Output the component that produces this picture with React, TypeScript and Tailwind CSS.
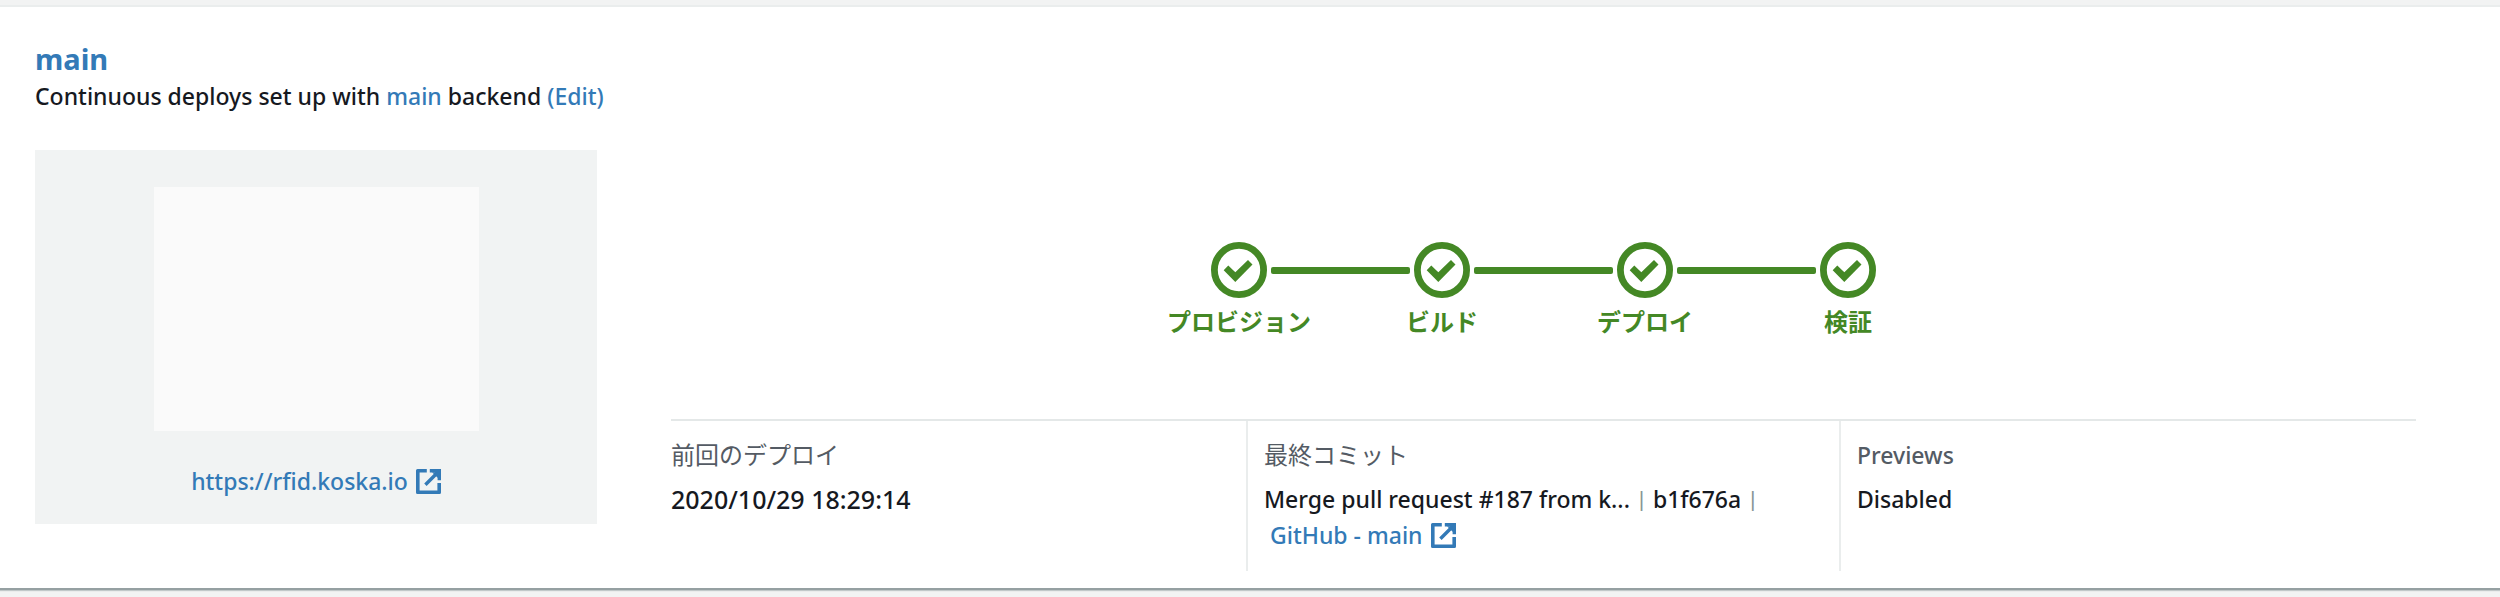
import React from "react";
import type { ReactNode } from "react";

const STEPS = ["プロビジョン", "ビルド", "デプロイ", "検証"];

function ExternalIcon() {
  return (
    <svg viewBox="0 0 25 25" className="size-[25px] shrink-0" fill="currentColor" aria-hidden="true">
      <path d="M1.5 0H10.8V3.5H3.6V21.4H21.4V14H25V23.5A1.5 1.5 0 0 1 23.5 25H1.5A1.5 1.5 0 0 1 0 23.5V1.5A1.5 1.5 0 0 1 1.5 0Z" />
      <path d="M13.8 0H25V11.2H21.6V6L10.6 17L8.2 14.6L19.2 3.5H13.8Z" />
      <path d="M16 3.2H22V9Z" />
    </svg>
  );
}

function CheckCircle() {
  return (
    <svg viewBox="-28 -28 56 56" className="mx-1 size-14 shrink-0" aria-hidden="true">
      <circle r="24.6" fill="none" stroke="currentColor" strokeWidth="6.8" />
      <path fill="currentColor" d="M-15.3 0.2L-10.7 -4.6L-3.7 2.2L9 -10L13.5 -5.6L-3.7 12Z" />
    </svg>
  );
}

function Step({ label, first, last }: { label: string; first: boolean; last: boolean }) {
  return (
    <li className="flex w-[203px] flex-col items-center gap-[6px]">
      <div className="flex w-full items-center">
        <span className={`h-[7px] flex-1 rounded-r-xs ${first ? "" : "bg-current"}`} />
        <CheckCircle />
        <span className={`h-[7px] flex-1 rounded-l-xs ${last ? "" : "bg-current"}`} />
      </div>
      <span className="text-[24px] font-bold">{label}</span>
    </li>
  );
}

function Detail({ title, className, children }: { title: ReactNode; className: string; children: ReactNode }) {
  return (
    <div className={`flex flex-col gap-2 pt-4 pb-[18px] ${className}`}>
      <dt className="text-[#545b64]">{title}</dt>
      <dd>{children}</dd>
    </div>
  );
}

function JaTitle({ children }: { children: ReactNode }) {
  return <span className="text-[24px] font-normal">{children}</span>;
}

function Bar() {
  return <span className="text-[20px] text-[#879596]">|</span>;
}

export default function App() {
  return (
    <div
      lang="ja"
      className="min-h-screen bg-[#f2f3f3] font-['Noto_Sans','Noto_Sans_CJK_JP',sans-serif] text-[23px] leading-[36px] font-medium text-[#16191f]"
    >
      <div className="h-[7px] border-b-2 border-[#eaeded]" />
      <main className="border-b-2 border-[#95a0a2] bg-white pt-8 pr-[84px] pb-[17px] pl-[35px] shadow-[0_1px_1px_rgba(0,28,36,0.2)]">
        <h2 className="text-[29px] leading-[39px] font-bold">
          <a href="#main" className="text-[#337ab7]">main</a>
        </h2>
        <p>
          Continuous deploys set up with <a href="#backend" className="text-[#337ab7]">main</a> backend{" "}
          <a href="#edit" className="text-[#337ab7]">(Edit)</a>
        </p>

        <div className="mt-9 flex items-start gap-[74px]">
          <div className="flex w-[562px] shrink-0 flex-col items-center gap-8 bg-[#f1f3f3] pt-[37px] pb-[25px]">
            <div className="h-[244px] w-[325px] bg-[#fafafa]" />
            <a href="https://rfid.koska.io" className="flex items-center gap-2 text-[#337ab7]">
              https://rfid.koska.io
              <ExternalIcon />
            </a>
          </div>

          <div className="min-w-0 flex-1 pt-[92px]">
            <ol className="flex justify-center text-[#448825]">
              {STEPS.map((label, i) => (
                <Step key={label} label={label} first={i === 0} last={i === STEPS.length - 1} />
              ))}
            </ol>
            <dl className="mt-[79px] grid grid-cols-[575fr_593fr_577fr] border-t-2 border-[#e4e8e8]">
              <Detail title={<JaTitle>前回のデプロイ</JaTitle>} className="pr-[18px]">
                <time dateTime="2020-10-29T18:29:14" className="text-[25px]">2020/10/29 18:29:14</time>
              </Detail>
              <Detail title={<JaTitle>最終コミット</JaTitle>} className="border-l-2 border-[#eaeded] px-4">
                <div className="flex gap-[6px]">
                  <span>Merge pull request #187 from k...</span>
                  <Bar />
                  <span>b1f676a</span>
                  <Bar />
                </div>
                <a href="#github" className="flex items-center gap-2 pl-[6px] text-[#337ab7]">
                  GitHub - main
                  <ExternalIcon />
                </a>
              </Detail>
              <Detail title="Previews" className="border-l-2 border-[#eaeded] pl-4">
                Disabled
              </Detail>
            </dl>
          </div>
        </div>
      </main>
    </div>
  );
}
